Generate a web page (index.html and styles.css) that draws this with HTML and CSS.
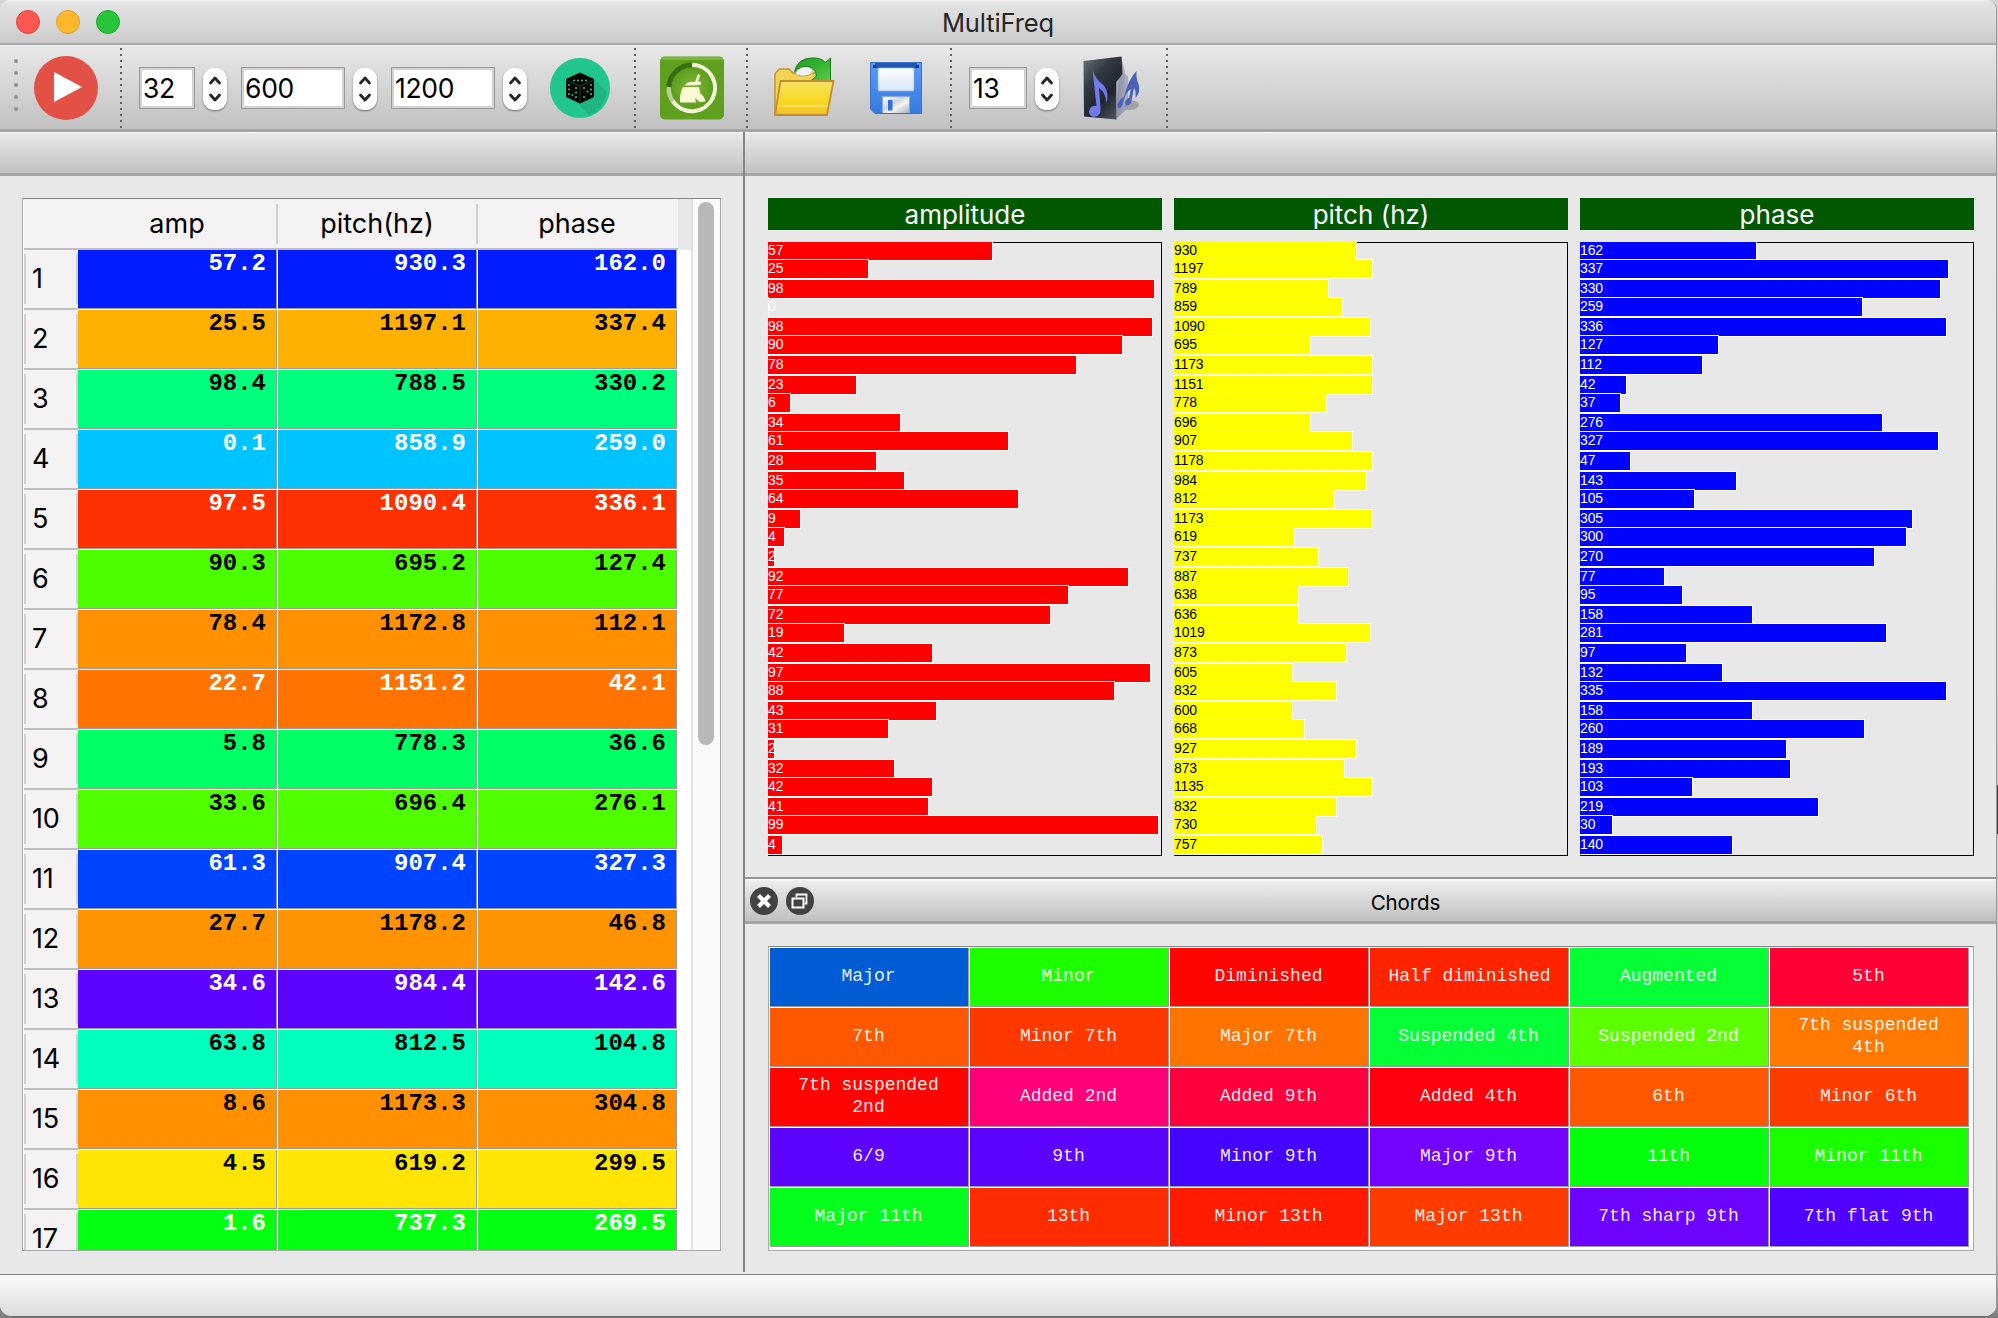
FILE: index.html
```html
<!DOCTYPE html>
<html lang="en">
<head>
<meta charset="utf-8">
<title>MultiFreq</title>
<link rel="stylesheet" href="styles.css">
</head>
<body>
<div class="window">
  <header class="titlebar">
    <div class="lights"><i class="light red"></i><i class="light amber"></i><i class="light green"></i></div>
    <h1 class="title">MultiFreq</h1>
  </header>

  <div class="toolbar">
    <div class="handle"><i></i><i></i><i></i><i></i><i></i></div>
    <svg class="icon" viewBox="0 0 64 64">
      <circle cx="32" cy="32" r="32" fill="#e35146"/>
      <path d="M20 16 L48 31 L20 46 Z" fill="#fff"/>
    </svg>
    <div class="sep"></div>
    <div class="spins">
      <div class="spin"><div class="field small">32</div><div class="stepper"><svg viewBox="0 0 24 42"><path d="M7.5 15 L12 10 L16.500 15 M7.500 27 L12 32 L16.500 27"/></svg></div></div>
      <div class="spin"><div class="field">600</div><div class="stepper"><svg viewBox="0 0 24 42"><path d="M7.5 15 L12 10 L16.500 15 M7.500 27 L12 32 L16.500 27"/></svg></div></div>
      <div class="spin"><div class="field">1200</div><div class="stepper"><svg viewBox="0 0 24 42"><path d="M7.5 15 L12 10 L16.500 15 M7.500 27 L12 32 L16.500 27"/></svg></div></div>
    </div>
    <svg class="icon" viewBox="0 0 64 64">
      <circle cx="32" cy="32" r="30" fill="#20c68d"/>
      <path d="M46 23 L59 36 Q56 52 41 59 L28 46 Z" fill="#1fb481"/>
      <path d="M32 16.500 L46 23 V41 L32 47.500 L18 41 V23 Z" fill="#000"/>
      <g fill="none" stroke="#15805c" stroke-width="1.2">
        <path d="M18.500 24 L32 30 L45.500 24 M32 30 V46" stroke="#0a3b2b"/>
      </g>
      <g fill="#2bbd8b">
        <circle cx="26" cy="24.500" r="1.100"/><circle cx="30" cy="24.500" r="1.100"/><circle cx="34" cy="24.500" r="1.100"/><circle cx="38" cy="24.500" r="1.100"/>
        <circle cx="21" cy="29" r="1.100"/><circle cx="21" cy="33.500" r="1.100"/><circle cx="21" cy="38" r="1.100"/>
        <circle cx="28" cy="32" r="1.100"/><circle cx="28" cy="36.500" r="1.100"/><circle cx="28" cy="41" r="1.100"/><circle cx="24.500" cy="39" r="1"/>
        <circle cx="43" cy="29" r="1.100"/><circle cx="43" cy="33.500" r="1.100"/><circle cx="43" cy="38" r="1.100"/>
        <circle cx="36" cy="32" r="1.100"/><circle cx="36" cy="41" r="1.100"/><circle cx="39.500" cy="35.500" r="1.100"/>
      </g>
    </svg>
    <div class="sep"></div>
    <svg class="icon" viewBox="0 0 64 64">
      <defs>
        <radialGradient id="leaf" cx=".5" cy=".5" r=".55"><stop offset="0" stop-color="#7fb839"/><stop offset=".7" stop-color="#5f9f20"/><stop offset="1" stop-color="#5b9b1c"/></radialGradient>
      </defs>
      <rect x="0" y=".5" width="64" height="63" rx="5" fill="#5fa01f"/>
      <rect x="1" y="1" width="62" height="3" rx="1.500" fill="#79b83a"/>
      <circle cx="32" cy="32" r="25" fill="url(#leaf)"/>
      <path d="M32 9 A23.200 23.200 0 0 0 8.800 32" fill="none" stroke="#34720f" stroke-width="5"/>
      <path d="M8.800 31 A23.200 23.200 0 0 0 14 47" fill="none" stroke="#b7cf94" stroke-width="4.500"/>
      <path d="M32 8.800 A23.200 23.200 0 1 1 13 45.500" fill="none" stroke="#f6f5dc" stroke-width="4"/>
      <path d="M35 26 L38 18 L40.500 19 L38 25 L41 26 Q41.500 28.500 39 29 L25 29.500 Q27.500 25 35 26 Z M23 31 L39 31 L40 37 Q45 41 45.500 45.500 L39.500 46 L35 42 L36 46.500 L20 46.500 Q19.500 37 23 31 Z" fill="#fbf8d4"/>
    </svg>
    <div class="sep"></div>
    <svg class="icon" viewBox="0 0 64 64">
      <defs>
        <linearGradient id="fold" x1="0" y1="0" x2="0" y2="1"><stop offset="0" stop-color="#f7e465"/><stop offset=".55" stop-color="#f8da25"/><stop offset="1" stop-color="#f0c022"/></linearGradient>
        <linearGradient id="arrow" x1="0" y1="0" x2="1" y2="1"><stop offset="0" stop-color="#1f9d22"/><stop offset=".5" stop-color="#35b433"/><stop offset="1" stop-color="#63cf55"/></linearGradient>
      </defs>
      <path d="M3 57 V18 L7 13 H17 L21 17 H54 V57 Z" fill="#f3d450" stroke="#c69238" stroke-width="1.500"/>
      <path d="M23 18 Q27 9 36 10 Q42 12 41 17 Q32 22 25 19 Z" fill="#f2f2ee" stroke="#a89a50" stroke-width=".8"/>
      <path d="M22.500 16 Q25 2.500 40 2 Q49 1.500 53.500 6.500 L58.500 2 V28 L38.500 25 L44.500 20 Q44 12 36 10.500 Q28 9.500 22.500 16 Z" fill="url(#arrow)" stroke="#16801b" stroke-width="1"/>
      <path d="M8.500 25 H61.500 L55 59 H3 Z" fill="url(#fold)" stroke="#c48b36" stroke-width="1.800"/>
      <path d="M5.500 50 H55.500" stroke="#fae36a" stroke-width="1.500"/>
    </svg>
    <svg class="icon floppy" viewBox="0 0 64 64">
      <defs>
        <linearGradient id="disk" x1="0" y1="0" x2="0" y2="1"><stop offset="0" stop-color="#5b9af6"/><stop offset="1" stop-color="#347be0"/></linearGradient>
        <linearGradient id="paper" x1="0" y1="0" x2="0" y2="1"><stop offset="0" stop-color="#fff"/><stop offset="1" stop-color="#d9e6f8"/></linearGradient>
        <linearGradient id="metal" x1="0" y1="0" x2="1" y2="1"><stop offset="0" stop-color="#fff"/><stop offset=".4" stop-color="#cfd3da"/><stop offset=".6" stop-color="#f4f5f7"/><stop offset="1" stop-color="#a5abb8"/></linearGradient>
      </defs>
      <path d="M6.500 6.500 H57.500 V57.500 H11 L6.500 53 Z" fill="url(#disk)" stroke="#3a70c8" stroke-width="1"/>
      <rect x="11" y="7" width="42" height="5" fill="#2457b4"/>
      <rect x="9" y="9" width="3" height="3" fill="#123a86"/><rect x="52" y="9" width="3" height="3" fill="#123a86"/>
      <rect x="14" y="12" width="36" height="23" rx="1.500" fill="url(#paper)" stroke="#8eb3ea" stroke-width=".8"/>
      <rect x="18" y="40" width="28" height="17" fill="#8aa8dc"/>
      <rect x="19" y="41" width="26" height="16" fill="url(#metal)"/>
      <rect x="24" y="44" width="4.500" height="10.500" fill="#2e6fd8"/>
    </svg>
    <div class="sep"></div>
    <div class="spins last">
      <div class="spin"><div class="field small">13</div><div class="stepper"><svg viewBox="0 0 24 42"><path d="M7.5 15 L12 10 L16.500 15 M7.500 27 L12 32 L16.500 27"/></svg></div></div>
    </div>
    <svg class="icon" viewBox="0 0 64 64">
      <defs>
        <linearGradient id="box" x1="0" y1="0" x2=".7" y2="1"><stop offset="0" stop-color="#6d7677"/><stop offset=".35" stop-color="#343b45"/><stop offset=".7" stop-color="#20242e"/><stop offset="1" stop-color="#474c58"/></linearGradient>
        <linearGradient id="side" x1="0" y1="0" x2="1" y2="0"><stop offset="0" stop-color="#717687"/><stop offset="1" stop-color="#b9bcc9"/></linearGradient>
      </defs>
      <ellipse cx="49" cy="49" rx="10" ry="5" fill="#a2a2a4"/>
      <path d="M41 1 L45 15 L45 54 L35 64 Z" fill="url(#side)"/>
      <path d="M3.500 5 L41.500 .5 L42.500 18 L36.500 26 V63.500 L4 60.500 Z" fill="url(#box)"/>
      <path d="M43 17 L48 20 V52 L36 63 V28 Z" fill="#9296ad" opacity=".65"/>
      <path d="M12.500 14 Q15 23 23.500 29 Q30 38 26 47 Q26.500 37 19 32 L20.500 52 Q21 60 14.500 61 Q8.500 60.500 9 55 Q11 49 16.500 50 Z" fill="#6f7ce8"/>
      <path d="M56.500 15 Q56 23 58.500 28 Q61 36 55.500 42 Q56 33 54 32 L51 47 Q47 52 45 47 Q47 42 49 42 L51 33 Q45 36 42 50 Q38 55 37.500 49 Q40 42 44 41 Q48 24 56.500 15 Z" fill="#4b61b6"/>
    </svg>
    <div class="sep"></div>
  </div>

  <div class="docks">
    <section class="dock left">
      <div class="dockbar"></div>
      <div class="pane">
        <div class="table">
          <div class="grid">
            <div class="head"><span></span><span>amp</span><span>pitch(hz)</span><span>phase</span></div>
            <div class="rows" id="rows"></div>
          </div>
          <div class="track"><div class="thumb"></div></div>
        </div>
      </div>
    </section>
    <div class="right">
      <section class="dock">
        <div class="dockbar"></div>
        <div class="charts">
          <div class="chart"><h2>amplitude</h2><div class="plot amp" id="amp"></div></div>
          <div class="chart"><h2>pitch (hz)</h2><div class="plot pitch" id="pitch"></div></div>
          <div class="chart"><h2>phase</h2><div class="plot phase" id="phase"></div></div>
        </div>
      </section>
      <section class="dock chords">
        <div class="dockbar titled">
          <div class="buttons">
            <svg viewBox="0 0 28 34"><ellipse cx="14" cy="17" rx="14" ry="14" fill="#424242"/><path d="M8.500 11.500 L19.500 22.500 M19.500 11.500 L8.500 22.500" stroke="#fff" stroke-width="4.200"/></svg>
            <svg viewBox="0 0 28 34"><ellipse cx="14" cy="17" rx="14" ry="14" fill="#424242"/><path d="M10.500 13 V10.500 H20.500 V19.500 H18.500" fill="none" stroke="#fff" stroke-width="1.800"/><rect x="6.500" y="14.500" width="11" height="9" fill="none" stroke="#fff" stroke-width="2"/></svg>
          </div>
          <h2>Chords</h2>
        </div>
        <div class="chordpane"><div class="chordgrid" id="chords"></div></div>
      </section>
    </div>
  </div>
  <footer class="statusbar"></footer>
</div>
<div class="sliver"></div>
<script src="script.js"></script>
</body>
</html>
```
FILE: styles.css
```css
* { box-sizing: border-box; }

body {
  margin: 0;
  width: 1998px;
  height: 1318px;
  overflow: hidden;
  background: linear-gradient(#d4d4d4, #c4c4c4 95%, #7c7c7c);
  font-family: Inter, "Liberation Sans", sans-serif;
  font-size: 26px;
  color: #000;
}

.window {
  display: flex;
  flex-direction: column;
  width: 1997px;
  height: 1317px;
  border-right: 1px solid #999;
  border-bottom: 1px solid #6a6a6a;
  border-radius: 10px 10px 12px 12px;
  background: #e8e8e8;
  overflow: hidden;
}

h1, h2 { margin: 0; font-size: 26px; font-weight: 400; }

.titlebar {
  flex: none;
  display: grid;
  grid-template-columns: 1fr auto 1fr;
  align-items: center;
  height: 45px;
  border-bottom: 2px solid #acacac;
  background: linear-gradient(#f4f4f4 0, #e4e4e4 2px, #cccccc);
}

.lights { display: flex; gap: 16px; padding-left: 16px; }
.light { width: 24px; height: 24px; border-radius: 50%; }
.red { background: #fe5650; border: 1px solid #df4540; }
.amber { background: #feb82b; border: 1px solid #de9d2b; }
.green { background: #26c53a; border: 1px solid #22a52f; }

.title {
  grid-column: 2;
  padding-top: 2px;
  font-size: 25.5px;
  line-height: 30px;
  letter-spacing: -0.1px;
  color: #262626;
}

.toolbar {
  flex: none;
  display: flex;
  align-items: center;
  height: 87px;
  padding: 0 0 1px 14px;
  border-bottom: 3px solid #a4a4a4;
  background: linear-gradient(#e9e9e9, #c1c1c1);
}

.handle { display: flex; flex-direction: column; gap: 8px; margin-right: 16px; padding-bottom: 4px; }
.handle i { width: 4px; height: 4px; border-radius: 50%; background: #8f8f8f; }

.icon { flex: none; width: 64px; height: 64px; margin-top: 3px; }
.floppy { margin-left: 28px; }

.sep {
  flex: none;
  width: 2px;
  height: 80px;
  margin: 2px 24px 0 22px;
  background: repeating-linear-gradient(#5e5e5e 0 2px, transparent 2px 6px);
}

.spins { display: flex; gap: 14px; margin: 3px 21px 0 -7px; }
.spin { display: flex; gap: 8px; }

.field {
  width: 104px;
  height: 42px;
  padding-left: 3px;
  border: 1px solid #999;
  outline: 2px solid #d2d2d2;
  outline-offset: -3px;
  background: #fff;
  font-size: 26.5px;
  line-height: 40px;
  letter-spacing: -0.3px;
}
.field.small { width: 56px; }
.last .field { width: 58px; }

.stepper {
  width: 24px;
  height: 42px;
  margin-top: 1px;
  border-radius: 11px;
  background: #fff;
  box-shadow: 0 1px 2px rgba(0, 0, 0, .45);
}
.stepper svg { display: block; fill: none; stroke: #262626; stroke-width: 2.8; stroke-linecap: round; stroke-linejoin: round; }

.docks { flex: 1; display: flex; min-height: 0; border-bottom: 2px solid #ececec; }
.dock { display: flex; flex-direction: column; }
.left { width: 745px; border-right: 2px solid #858585; }
.right { flex: 1; display: flex; flex-direction: column; }

.dockbar {
  flex: none;
  height: 44px;
  border-top: 1px solid #fff;
  border-bottom: 3px solid #a4a4a4;
  background: linear-gradient(#eae9ea, #c1c1c1);
}

.pane { padding: 22px; }

/* Frequency table */
.table {
  display: flex;
  width: 699px;
  height: 1053px;
  border: 1px solid #aaa;
  border-top-color: #858585;
  background: #fff;
  overflow: hidden;
}
.grid { width: 668px; padding-left: 1px; }

.head {
  display: grid;
  grid-template-columns: 54px 200px 200px 200px;
  height: 51px;
  background: linear-gradient(90deg, #f4f2f3 654px, #e8e8e8 654px);
}
.head span {
  position: relative;
  height: 51px;
  padding-right: 2px;
  border-bottom: 2px solid #c0bfc0;
  text-align: center;
  font-size: 27px;
  line-height: 50px;
  letter-spacing: 0;
}
.head span:nth-child(2)::after, .head span:nth-child(3)::after {
  content: "";
  position: absolute;
  right: 0;
  top: 5px;
  width: 2px;
  height: 40px;
  background: #d0d0d0;
}

.row { display: grid; grid-template-columns: 54px 200px 200px 200px; height: 60px; }
.num {
  height: 60px;
  padding-left: 8px;
  border-bottom: 2px solid #c0bfc0;
  background:
    linear-gradient(#d2d0d2, #d2d0d2) 0 4px / 2px 50px no-repeat,
    linear-gradient(#d2d0d2, #d2d0d2) 100% 4px / 2px 50px no-repeat,
    #f4f2f3;
  font-size: 27px;
  line-height: 58px;
  letter-spacing: -0.3px;
}

.cell {
  height: 60px;
  border: 0 solid #fff;
  border-width: 0 1px 1px 0;
  box-shadow: inset -1px -1px 0 #9c9c9c;
  background: var(--hue);
}
.value {
  padding-right: 11px;
  color: #000;
  font: bold 24px/27px "Liberation Mono", monospace;
  text-align: right;
}
.value.light-ink { color: #fff; }

.track { flex: 1; padding: 3px 0 0 5px; border-left: 2px solid #e2e2e2; background: #fafafa; }
.thumb { width: 16px; height: 543px; border-radius: 8px; background: #b8b8b8; }

/* Bar charts */
.charts { display: flex; gap: 12px; height: 701px; padding: 22px 22px 23px 23px; }
.chart { width: 394px; }
.chart h2 {
  height: 32px;
  margin-bottom: 12px;
  background: #005800;
  color: #fff;
  text-align: center;
  line-height: 34px;
}
.plot {
  height: 614px;
  border: 1px solid #000;
  border-left: 0;
}
.bars { margin-top: -2px; height: 614px; overflow: hidden; clip-path: inset(1px 0 0 0); }
.bar {
  height: 20px;
  border: 1px solid #fff;
  border-left: 0;
  background: var(--ink);
  color: #fff;
  font: 14px/17px "Liberation Sans", Arial, sans-serif;
  letter-spacing: -0.15px;
  white-space: nowrap;
}
.bar.tight { margin-top: -2px; }
.amp { --ink: #f00; }
.pitch { --ink: #ff0; }
.phase { --ink: #0004ff; }
.pitch .bar { color: #000; border-color: #fffff0; }

/* Chords */
.titled {
  display: grid;
  grid-template-columns: 1fr auto 1fr;
  height: 47px;
  border-top: 2px solid #969696;
  background: linear-gradient(#fff 0, #ededed 2px, #c0c0c0);
}
.titled h2 { padding: 4px 0 0 70px; font-size: 20.5px; line-height: 40px; letter-spacing: -0.1px; }
.buttons { display: flex; gap: 8px; padding: 5px 0 0 5px; }
.buttons svg { width: 28px; height: 34px; }

.chordpane { padding: 22px 22px 22px 23px; }
.chordgrid {
  display: grid;
  grid-template-columns: repeat(6, 200px);
  grid-auto-rows: 60px;
  width: 1206px;
  height: 305px;
  padding: 1px 0 0 1px;
  border: 1px solid #aaa;
  border-top-color: #858585;
  background: #fff;
}
.chord {
  display: flex;
  align-items: center;
  justify-content: center;
  padding: 0 20px 3px 18px;
  color: rgba(255, 255, 255, .93);
  font: 18px/22px "Liberation Mono", monospace;
  text-align: center;
}
.chord.wide { padding-left: 10px; padding-right: 10px; }

.statusbar {
  flex: none;
  height: 42px;
  border-top: 1px solid #808080;
  background: linear-gradient(#fafafa, #dcdcdc);
}

/* Window behind, showing at the right screen edge */
.sliver { position: absolute; left: 1997px; top: 785px; width: 1px; height: 49px; background: #404040; }
```
FILE: script.js
```js
const rows = [
  ["57.2", "930.3", "162.0", "#001cff", 1], ["25.5", "1197.1", "337.4", "#ffb000", 0],
  ["98.4", "788.5", "330.2", "#00ff7c", 0], ["0.1", "858.9", "259.0", "#00c4ff", 1],
  ["97.5", "1090.4", "336.1", "#ff3000", 1], ["90.3", "695.2", "127.4", "#4cff00", 0],
  ["78.4", "1172.8", "112.1", "#ff9000", 0], ["22.7", "1151.2", "42.1", "#ff7400", 1],
  ["5.8", "778.3", "36.6", "#00ff64", 0], ["33.6", "696.4", "276.1", "#50ff00", 0],
  ["61.3", "907.4", "327.3", "#0044ff", 1], ["27.7", "1178.2", "46.8", "#ff9400", 0],
  ["34.6", "984.4", "142.6", "#5c04ff", 1], ["63.8", "812.5", "104.8", "#00ffbc", 0],
  ["8.6", "1173.3", "304.8", "#ff9000", 0], ["4.5", "619.2", "299.5", "#ffe404", 0],
  ["1.6", "737.3", "269.5", "#04ff10", 1]
];

document.getElementById("rows").innerHTML = rows.map((r, i) =>
  `<div class="row"><div class="num">${i + 1}</div>` +
  r.slice(0, 3).map(v => `<div class="cell value${r[4] ? " light-ink" : ""}" style="--hue:${r[3]}">${v}</div>`).join("") +
  `</div>`).join("");

// Label and bar length for each of the 32 oscillators.
const series = {
  amp: "57:224 25:100 98:386 0:0 98:384 90:354 78:308 23:88 6:22 34:132 61:240 28:108 35:136 64:250 9:32 4:16 2:6 92:360 77:300 72:282 19:76 42:164 97:382 88:346 43:168 31:120 2:6 32:126 42:164 41:160 99:390 4:14",
  pitch: "930:182 1197:198 789:154 859:168 1090:196 695:136 1173:198 1151:198 778:152 696:136 907:178 1178:198 984:192 812:160 1173:198 619:120 737:144 887:174 638:124 636:124 1019:196 873:172 605:118 832:162 600:118 668:130 927:182 873:170 1135:198 832:162 730:142 757:148",
  phase: "162:176 337:368 330:360 259:282 336:366 127:138 112:122 42:46 37:40 276:302 327:358 47:50 143:156 105:114 305:332 300:326 270:294 77:84 95:102 158:172 281:306 97:106 132:142 335:366 158:172 260:284 189:206 193:210 103:112 219:238 30:32 140:152"
};
const steps = [18, 20, 18, 20, 18, 20, 20, 18, 20, 18, 20, 20, 18, 20, 18, 20, 20, 18, 20, 18, 20, 20, 18, 20, 18, 20, 20, 18, 20, 18, 20];

for (const [id, data] of Object.entries(series)) {
  document.getElementById(id).innerHTML = '<div class="bars">' + data.split(" ").map((item, i) => {
    const [label, length] = item.split(":");
    const tight = i > 0 && steps[i - 1] === 18 ? " tight" : "";
    return `<div class="bar${tight}" style="width:${+length + 1}px">${label}</div>`;
  }).join("") + "</div>";
}

const chords = [
  ["Major", "#005cd4"], ["Minor", "#1cff00"], ["Diminished", "#ff0400"], ["Half diminished", "#ff2400"], ["Augmented", "#04ff34"], ["5th", "#ff0034"],
  ["7th", "#ff5800"], ["Minor 7th", "#ff3800"], ["Major 7th", "#ff7400"], ["Suspended 4th", "#04ff34"], ["Suspended 2nd", "#5cff00"], ["7th suspended 4th", "#ff7800"],
  ["7th suspended 2nd", "#ff0400"], ["Added 2nd", "#ff0078"], ["Added 9th", "#ff003c"], ["Added 4th", "#ff000c"], ["6th", "#ff5800"], ["Minor 6th", "#ff3c00"],
  ["6/9", "#5c04ff"], ["9th", "#5c04ff"], ["Minor 9th", "#4404ff"], ["Major 9th", "#7404ff"], ["11th", "#04ff0c"], ["Minor 11th", "#18ff00"],
  ["Major 11th", "#04ff1c"], ["13th", "#ff2c00"], ["Minor 13th", "#ff1c00"], ["Major 13th", "#ff3c00"], ["7th sharp 9th", "#6c04ff"], ["7th flat 9th", "#5004ff"]
];
document.getElementById("chords").innerHTML = chords.map(([name, hue]) =>
  `<div class="cell chord${name.length === 15 ? " wide" : ""}" style="--hue:${hue}">${name}</div>`).join("");
```
